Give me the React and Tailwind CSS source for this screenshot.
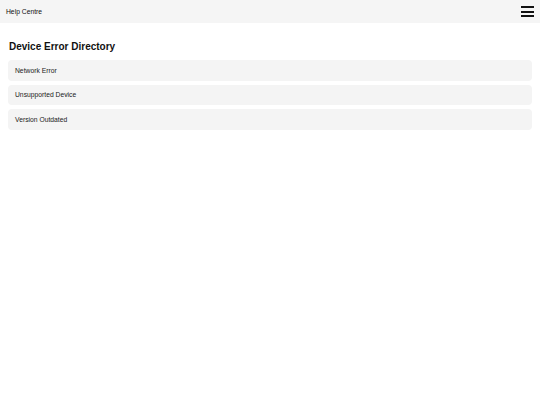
export default function App() {
  const items = ["Network Error", "Unsupported Device", "Version Outdated"];
  return (
    <div className="w-[540px] h-[405px] bg-white" style={{ fontFamily: '"Liberation Sans", Arial, sans-serif' }}>
      <header className="h-[23px] bg-[#f5f5f5] flex items-center justify-between pl-[6px] pr-[6px]">
        <span className="text-[6.75px] leading-none text-[#111] pt-[1.5px]">Help Centre</span>
        <div className="flex flex-col gap-[2.5px] w-[13px]">
          <div className="h-[2px] bg-[#111]" />
          <div className="h-[2px] bg-[#111]" />
          <div className="h-[2px] bg-[#111]" />
        </div>
      </header>
      <main className="px-[8px] pt-[18px]">
        <h1 className="text-[10px] font-bold leading-[12px] text-[#111] pl-[1px] mb-[7px]">Device Error Directory</h1>
        <div className="flex flex-col gap-[4px]">
          {items.map((t) => (
            <div key={t} className="bg-[#f4f4f4] rounded-[4px] h-[20.5px] flex items-center px-[7px] pt-[1px] text-[6.75px] text-[#222]">
              {t}
            </div>
          ))}
        </div>
      </main>
    </div>
  );
}
